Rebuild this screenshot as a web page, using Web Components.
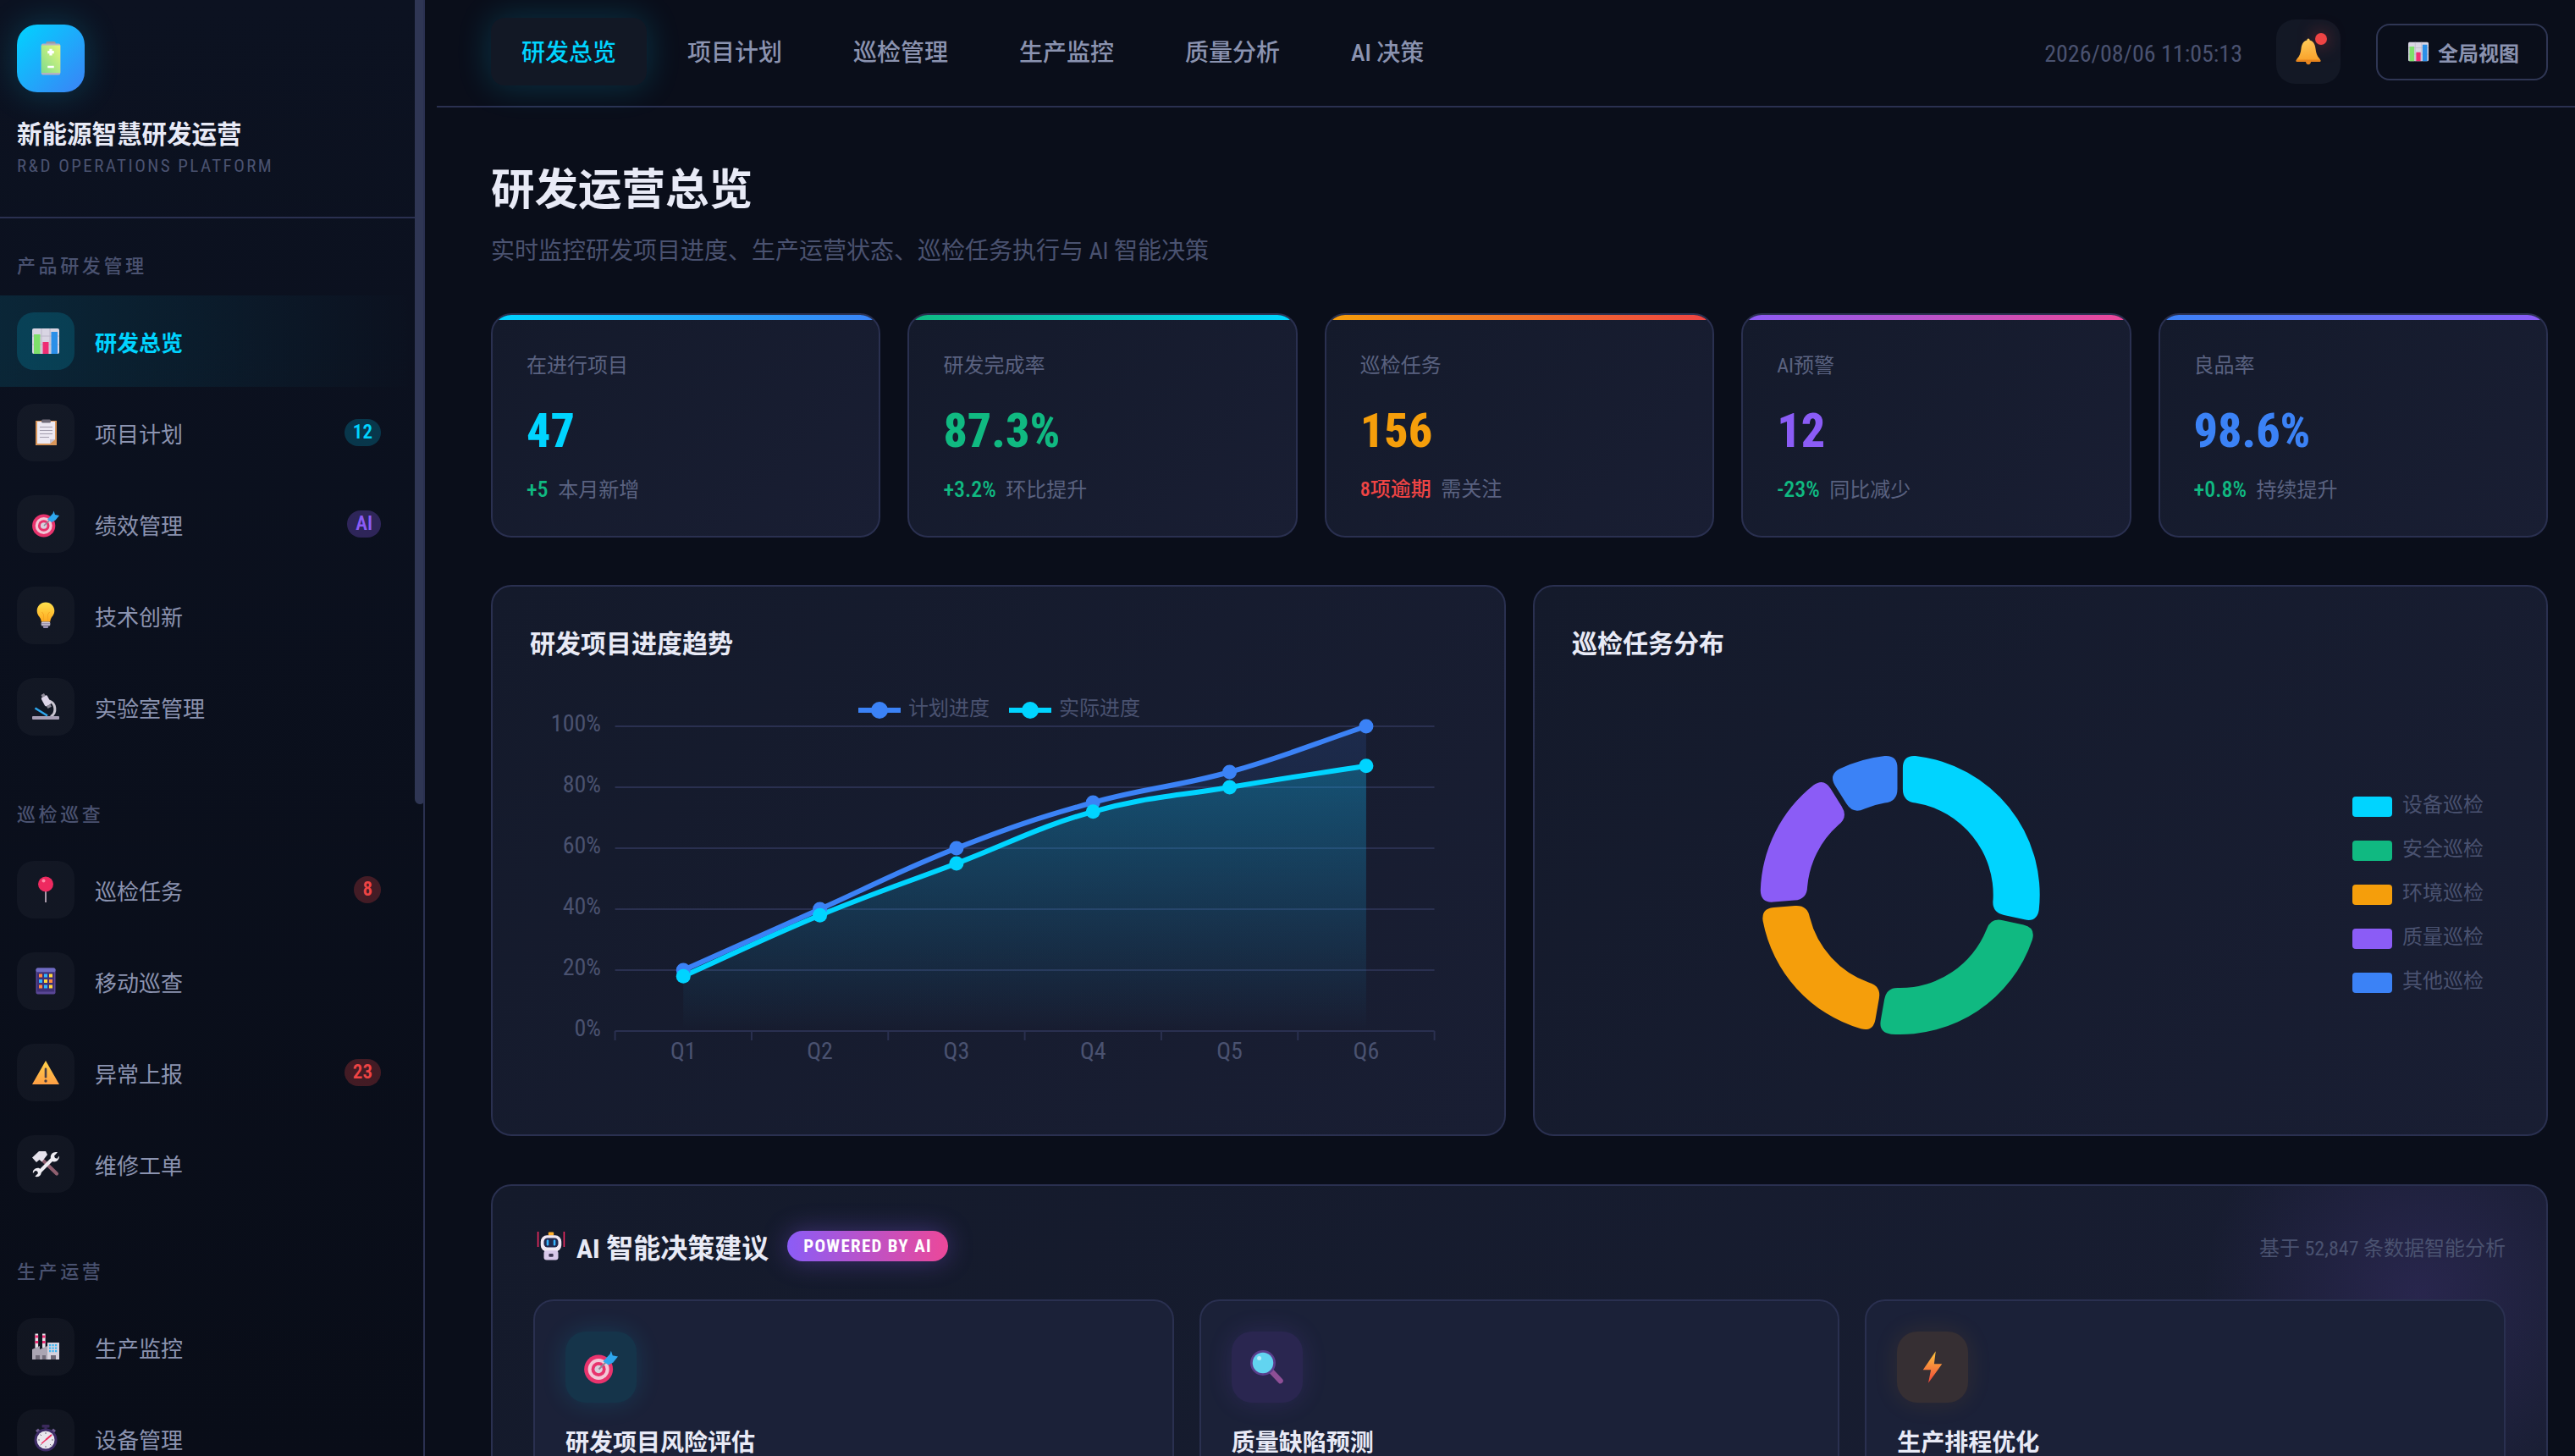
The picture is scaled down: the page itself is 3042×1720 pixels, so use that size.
<!DOCTYPE html>
<html lang="zh-CN">
<head>
<meta charset="utf-8">
<title>新能源智慧研发运营</title>
<style>
  html, body { margin: 0; height: 100%; background: #0a0e1a; overflow: hidden; }
  /* 85% picks the condensed Roboto cut, its latin and digits sit closest to the reference */
  body { font-family: "Roboto", "Noto Sans CJK SC", sans-serif; font-stretch: 85%; color: #8b93b0; }
</style>
</head>
<body>
<ne-app>
  <ne-sidebar slot="sidebar">
    <ne-nav-group label="产品研发管理">
      <ne-nav-item icon="chart" active>研发总览</ne-nav-item>
      <ne-nav-item icon="clipboard" badge="12" tone="cyan">项目计划</ne-nav-item>
      <ne-nav-item icon="target" badge="AI" tone="purple">绩效管理</ne-nav-item>
      <ne-nav-item icon="bulb">技术创新</ne-nav-item>
      <ne-nav-item icon="microscope">实验室管理</ne-nav-item>
    </ne-nav-group>
    <ne-nav-group label="巡检巡查">
      <ne-nav-item icon="pin" badge="8" tone="red">巡检任务</ne-nav-item>
      <ne-nav-item icon="mobile">移动巡查</ne-nav-item>
      <ne-nav-item icon="warning" badge="23" tone="red">异常上报</ne-nav-item>
      <ne-nav-item icon="tools">维修工单</ne-nav-item>
    </ne-nav-group>
    <ne-nav-group label="生产运营">
      <ne-nav-item icon="factory">生产监控</ne-nav-item>
      <ne-nav-item icon="stopwatch">设备管理</ne-nav-item>
    </ne-nav-group>
  </ne-sidebar>

  <ne-topbar>
    <ne-tab active>研发总览</ne-tab>
    <ne-tab>项目计划</ne-tab>
    <ne-tab>巡检管理</ne-tab>
    <ne-tab>生产监控</ne-tab>
    <ne-tab>质量分析</ne-tab>
    <ne-tab>AI 决策</ne-tab>
  </ne-topbar>

  <ne-page-head heading="研发运营总览" sub="实时监控研发项目进度、生产运营状态、巡检任务执行与 AI 智能决策"></ne-page-head>

  <ne-kpi-row>
    <ne-kpi label="在进行项目" value="47" delta="+5" note="本月新增" color="#00d4ff" bar="#00d4ff,#3b82f6"></ne-kpi>
    <ne-kpi label="研发完成率" value="87.3%" delta="+3.2%" note="环比提升" color="#10b981" bar="#10b981,#00d4ff"></ne-kpi>
    <ne-kpi label="巡检任务" value="156" delta="8项逾期" note="需关注" color="#f59e0b" bar="#f59e0b,#ef4444" delta-color="#ef4444" delta-size="24"></ne-kpi>
    <ne-kpi label="AI预警" value="12" delta="-23%" note="同比减少" color="#8b5cf6" bar="#8b5cf6,#ec4899"></ne-kpi>
    <ne-kpi label="良品率" value="98.6%" delta="+0.8%" note="持续提升" color="#3b82f6" bar="#3b82f6,#8b5cf6"></ne-kpi>
  </ne-kpi-row>

  <ne-chart-row>
    <ne-chart-card heading="研发项目进度趋势"><ne-line-chart></ne-line-chart></ne-chart-card>
    <ne-chart-card heading="巡检任务分布"><ne-donut-chart></ne-donut-chart></ne-chart-card>
  </ne-chart-row>

  <ne-ai-panel>
    <ne-ai-card icon="target" tone="cyan">研发项目风险评估</ne-ai-card>
    <ne-ai-card icon="magnifier" tone="purple">质量缺陷预测</ne-ai-card>
    <ne-ai-card icon="bolt" tone="orange">生产排程优化</ne-ai-card>
  </ne-ai-panel>
</ne-app>

<script>
// all icons live on a 32x32 box, ne-icon scales them through its size attribute
const ICONS = {
  battery: `<defs><linearGradient id="g" x1="0" y1="1" x2="1" y2="0"><stop offset="0" stop-color="#7fdc8c"/><stop offset="1" stop-color="#e6f77a"/></linearGradient></defs>
    <rect x="11.5" y="0" width="9" height="4" rx="1.2" fill="#9a98a4"/><rect x="7" y="2" width="18" height="29.5" rx="1.5" fill="#b4b1c2"/>
    <rect x="7" y="3.6" width="18" height="26" fill="url(#g)"/><path d="M14.7 7h2.6v1.8H19v2.6h-1.7v1.8h-2.6v-1.8H13V8.8h1.7z" fill="#fff"/><rect x="13" y="23" width="6" height="2" fill="#fff"/>`,
  chart: `<rect y="1" width="32" height="30" rx="2" fill="#d9d5e3"/><path d="M0 10h32M0 20h32M11 1v30M21 1v30" stroke="#bdb8ca" stroke-width="1"/>
    <rect x="2" y="8" width="7.5" height="23" fill="#7ee06a"/><rect x="12.5" y="17" width="7" height="14" fill="#ee2d73"/><rect x="22.5" y="5" width="7.5" height="26" fill="#2b8fe8"/>`,
  clipboard: `<rect x="4" y="2" width="25" height="29" fill="#d9965a"/><path d="M6 3h21v21l-6 5H6z" fill="#ece8f2"/><path d="M21 29l6-5h-6z" fill="#c6c0d0"/>
    <rect x="11" y="0.5" width="11" height="4" rx="1.5" fill="#6f6a78"/><path d="M9 9.5h15M9 13.5h15M9 17.5h15M9 21.5h11" stroke="#a39eae" stroke-width="1.2"/>`,
  target: `<circle cx="13.7" cy="18" r="13.6" fill="#e8336d"/><circle cx="13.7" cy="18" r="10" fill="#f3c6d6"/><circle cx="13.7" cy="18" r="6.8" fill="#e8336d"/><circle cx="13.7" cy="18" r="3.8" fill="#d8d0dc"/>
    <path d="M14 18L24 8" stroke="#8e8a98" stroke-width="1.6"/><path d="M18 10.5L24.5 3.5 25.5 0.5 27 5 32 6 27.5 11.5 23 14z" fill="#2ea7ee"/>`,
  bulb: `<defs><linearGradient id="g" x1="0" y1="0" x2="0" y2="1"><stop offset="0" stop-color="#ffe14d"/><stop offset="1" stop-color="#ffa91f"/></linearGradient></defs>
    <path d="M16 .5C10 .5 5.700 5 5.700 10.600c0 4.400 2.500 6.400 4 9 .7 1.200 1 2.500 1 4h10.600c0-1.500.3-2.800 1-4 1.500-2.600 4-4.600 4-9C26.300 5 22 .5 16 .5z" fill="url(#g)"/>
    <path d="M13.500 23V15l-2-3M18.500 23V15l2-3" stroke="#f5a623" stroke-width="1" fill="none"/><rect x="10.700" y="23.500" width="10.600" height="5" rx="1.500" fill="#cdc6d6"/><path d="M11 25.500h10M11 27.300h10" stroke="#8f86a0" stroke-width=".8"/><rect x="13" y="28.500" width="6" height="2.500" rx="1" fill="#9a8fb0"/>`,
  microscope: `<path d="M20 9c8 2.500 9.500 14 2 18.500" stroke="#c9c5d0" stroke-width="3" fill="none"/><rect y="27" width="32" height="4" rx="1" fill="#a79fb5"/>
    <g transform="rotate(-28 16 8)"><rect x="12" y="3" width="8" height="12" rx="2" fill="#ddd5e8"/><rect x="14" y="0" width="4" height="3.500" fill="#8e8a98"/><rect x="13.500" y="15" width="5" height="3" fill="#8e8a98"/></g>
    <path d="M3.500 17.500L18 26.500" stroke="#2ea7ee" stroke-width="2.600"/>`,
  pin: `<rect x="15.100" y="15" width="1.800" height="16" fill="#b9a8b8"/><circle cx="16" cy="9.500" r="9" fill="#ee2a60"/><circle cx="13.500" cy="5.500" r="2" fill="#ff8aa8"/>`,
  mobile: `<rect x="4.500" y=".5" width="23" height="31" rx="2" fill="#5a4696"/><rect x="4.500" y=".5" width="23" height="5" rx="2" fill="#6f6cc4"/><rect x="6" y="5.500" width="20" height="23" fill="#3f3076"/>
    <g><rect x="8" y="7.500" width="4" height="4" fill="#ff8a3d"/><rect x="14" y="7.500" width="4" height="4" fill="#2fb5ff"/><rect x="20" y="7.500" width="4" height="4" fill="#ffd83d"/>
    <rect x="8" y="14" width="4" height="4" fill="#2fb5ff"/><rect x="14" y="14" width="4" height="4" fill="#ffd83d"/><rect x="20" y="14" width="4" height="4" fill="#ff8a3d"/>
    <rect x="8" y="20.500" width="4" height="4" fill="#ff8a3d"/><rect x="14" y="20.500" width="4" height="4" fill="#2fb5ff"/><rect x="20" y="20.500" width="4" height="4" fill="#ffd83d"/></g>`,
  warning: `<defs><linearGradient id="g" x1="0" y1="0" x2="0" y2="1"><stop offset="0" stop-color="#ffd24a"/><stop offset="1" stop-color="#ff9f45"/></linearGradient></defs>
    <path d="M16 2L32 30H0z" fill="url(#g)"/><rect x="14.700" y="10.500" width="2.600" height="12" rx="1.300" fill="#4a3f45"/><circle cx="16" cy="26" r="1.700" fill="#4a3f45"/>`,
  tools: `<path d="M13 12L29 27.500" stroke="#8f5f6f" stroke-width="4.200" stroke-linecap="round"/><path d="M0 8.500L8 1h8l2 4-6.500 8.500-3-2.500-3.500 3z" fill="#e6e2ec"/>
    <path d="M8 26L25 9" stroke="#efedf3" stroke-width="4"/><path d="M22 9.500c-1-3.500 1.500-7.500 6-7.500.7 0 1.300.1 2 .3L26 6.500l1 2.500 2.500.8 2.300-3.300c.8 4.600-3.800 8.200-8 6.500z" fill="#efedf3"/><path d="M10.500 24.500c1 3.500-1.500 6.700-5 6.700-.8 0-1.600-.2-2.200-.5L7 27l-1-2.500-2.500-.5-2.500 3c-1-4 3.500-7.500 7.500-6z" fill="#efedf3"/>`,
  factory: `<rect x="3.500" y=".5" width="3.600" height="17" fill="#e6e2ea"/><path d="M3.500 2.500h3.600v3H3.500zM3.500 9h3.600v3H3.500z" fill="#ee2d73"/><rect x="12" y=".5" width="3.600" height="17" fill="#e6e2ea"/><path d="M12 2.500h3.600v3H12zM12 9h3.600v3H12z" fill="#ee2d73"/>
    <path d="M0 31V19l9-4v4l9-4v16z" fill="#aaa5b3"/><rect x="4" y="26" width="5" height="5" fill="#6f6a78"/><rect x="12" y="26" width="4" height="5" fill="#6f6a78"/><rect x="18" y="11" width="14" height="20" fill="#d6d2dd"/>
    <g fill="#3cb8f5"><rect x="20" y="13" width="2.200" height="2.200"/><rect x="23.500" y="13" width="2.200" height="2.200"/><rect x="27" y="13" width="2.200" height="2.200"/><rect x="20" y="16.500" width="2.200" height="2.200"/><rect x="23.500" y="16.500" width="2.200" height="2.200"/><rect x="27" y="16.500" width="2.200" height="2.200"/><rect x="20" y="20" width="2.200" height="2.200"/><rect x="23.500" y="20" width="2.200" height="2.200"/><rect x="27" y="20" width="2.200" height="2.200"/></g><rect x="22" y="26" width="6" height="5" fill="#6f6a78"/>`,
  stopwatch: `<rect x="11.500" y="0" width="9" height="3.500" rx="1" fill="#3b2a5c"/><rect x="14.500" y="3" width="3" height="3" fill="#3b2a5c"/><path d="M4 7l3-2.500 2.500 2.500-3 3zM28 7l-3-2.500-2.500 2.500 3 3z" fill="#6b5a8c"/>
    <circle cx="16" cy="18" r="13.500" fill="#3e2c66"/><circle cx="16" cy="18" r="10.500" fill="#e9e6ee"/><path d="M16 9v2M16 25v2M7 18h2M23 18h2M9.600 11.600l1.400 1.400M21 23l1.400 1.400M9.600 24.400l1.400-1.400M21 13l1.400-1.400" stroke="#6f6a78" stroke-width="1"/><path d="M16 18L23 12" stroke="#ee2d5f" stroke-width="2"/><path d="M16 18l-5 4.500" stroke="#ee2d5f" stroke-width="1.400"/>`,
  bell: `<defs><linearGradient id="g" x1="0" y1="0" x2="0" y2="1"><stop offset="0" stop-color="#ffd35c"/><stop offset="1" stop-color="#f9a029"/></linearGradient></defs>
    <path d="M16 .5c-1 0-1.600.8-1.600 1.900C10 3.500 8 7.500 7.500 12.500c-.5 5-1.800 8.500-4.500 11.500-.8.900-1.400 2-1.400 3.500h28.800c0-1.500-.6-2.600-1.400-3.500-2.700-3-4-6.500-4.500-11.500C24 7.500 22 3.500 17.600 2.400 17.600 1.300 17 .5 16 .5z" fill="url(#g)"/>
    <rect x="1.600" y="25.500" width="28.800" height="2.500" rx="1" fill="#e8861e"/><path d="M13 28h6c0 1.800-1.300 3.200-3 3.200S13 29.800 13 28z" fill="#e8861e"/>`,
  magnifier: `<path d="M20 20L28.500 29" stroke="#8e4f96" stroke-width="5" stroke-linecap="round"/><circle cx="12" cy="12" r="12" fill="#5a3f8c"/><circle cx="12" cy="12" r="9.800" fill="#62d4f0"/><circle cx="8.500" cy="7.500" r="2" fill="#b5f0fb"/>`,
  bolt: `<defs><linearGradient id="g" x1="0" y1="0" x2="0" y2="1"><stop offset="0" stop-color="#ffc83d"/><stop offset="1" stop-color="#f0443a"/></linearGradient></defs><path d="M19 1L7 18.500h7.500L12 31 25 13h-7.500z" fill="url(#g)"/>`,
  robot: `<path d="M1.500 0v17M30.500 0v17" stroke="#ee2a60" stroke-width="1.500"/><rect x="13" y=".5" width="6" height="4" rx="1" fill="#ffb02e"/><rect x="4.500" y="4" width="23" height="18" rx="7" fill="#f0e8f4"/>
    <rect x="8" y="7" width="16" height="10.500" rx="4" fill="#20284f"/><rect x="11" y="9" width="2.400" height="6.500" rx="1" fill="#36b5ff"/><rect x="18.600" y="9" width="2.400" height="6.500" rx="1" fill="#36b5ff"/>
    <rect x="8" y="21" width="16" height="10.500" rx="3" fill="#d8c8ea"/><rect x="13.500" y="24.500" width="5" height="3.500" rx="1" fill="#3a3350"/>`,
};

class NeIcon extends HTMLElement {
  constructor() {
    super();
    const size = this.getAttribute('size') || 32;
    const root = this.attachShadow({ mode: 'open' });
    root.innerHTML = `
      <style>:host { display: block; width: ${size}px; height: ${size}px; } svg { display: block; }</style>
      <svg width="${size}" height="${size}" viewBox="0 0 32 32">${ICONS[this.getAttribute('name')] || ''}</svg>`;
  }
}
customElements.define('ne-icon', NeIcon);

class NeApp extends HTMLElement {
  constructor() {
    super();
    this.attachShadow({ mode: 'open' }).innerHTML = `
      <style>
        :host { display: flex; height: 1720px; overflow: hidden; }
        main { flex: 1; min-width: 0; margin-left: 14px; display: flex; flex-direction: column; }
        .content { display: flex; flex-direction: column; padding: 67px 32px 0 64px; }
      </style>
      <slot name="sidebar"></slot>
      <main>
        <slot name="top"></slot>
        <div class="content"><slot></slot></div>
      </main>`;
  }
  connectedCallback() {
    const top = this.querySelector('ne-topbar');
    if (top) top.slot = 'top';
  }
}
customElements.define('ne-app', NeApp);

class NeSidebar extends HTMLElement {
  constructor() {
    super();
    this.attachShadow({ mode: 'open' }).innerHTML = `
      <style>
        :host { display: block; position: relative; flex: 0 0 502px; box-sizing: border-box; height: 100%; overflow: hidden;
                border-right: 2px solid #2a3050; background: linear-gradient(180deg, #0c1221, #090d18); }
        header { height: 258px; box-sizing: border-box; padding: 29px 20px 0; border-bottom: 2px solid #2a3050; }
        .logo { width: 80px; height: 80px; border-radius: 24px; display: flex; align-items: center; justify-content: center;
                background: linear-gradient(135deg, #00d4ff, #3b82f6); box-shadow: 0 0 40px rgba(0,212,255,.22); }
        h1 { margin: 30px 0 0; font-size: 29.500px; line-height: 40px; font-weight: 700; color: #e8eaf6; white-space: nowrap; }
        .sub { margin-top: 5px; font-size: 21px; line-height: 24px; letter-spacing: 2.450px; color: #4a5270; white-space: nowrap; }
        nav { padding: 42px 10px 0 0; display: flex; flex-direction: column; gap: 59px; }
        .thumb { position: absolute; top: 0; right: -2px; width: 12px; height: 950px; background: #2f3654; border-radius: 0 0 6px 6px; }
      </style>
      <header>
        <div class="logo"><ne-icon name="battery" size="40"></ne-icon></div>
        <h1>新能源智慧研发运营</h1>
        <div class="sub">R&amp;D OPERATIONS PLATFORM</div>
      </header>
      <nav><slot></slot></nav>
      <div class="thumb"></div>`;
  }
}
customElements.define('ne-sidebar', NeSidebar);

class NeNavGroup extends HTMLElement {
  constructor() {
    super();
    this.attachShadow({ mode: 'open' }).innerHTML = `
      <style>
        :host { display: block; }
        .label { padding-left: 20px; height: 30px; line-height: 30px; margin-bottom: 19px; font-size: 22px; letter-spacing: 3.600px; color: #4a5270; font-weight: 500; }
      </style>
      <div class="label">${this.getAttribute('label')}</div>
      <slot></slot>`;
  }
}
customElements.define('ne-nav-group', NeNavGroup);

const BADGE_TONES = {
  cyan: ['rgba(0,212,255,.2)', '#00d4ff'],
  purple: ['rgba(139,92,246,.28)', '#8b5cf6'],
  red: ['rgba(239,68,68,.25)', '#ef4444'],
};

class NeNavItem extends HTMLElement {
  constructor() {
    super();
    const active = this.hasAttribute('active');
    const badge = this.getAttribute('badge');
    const tone = BADGE_TONES[this.getAttribute('tone')] || BADGE_TONES.cyan;
    this.attachShadow({ mode: 'open' }).innerHTML = `
      <style>
        :host { display: flex; align-items: center; height: 108px; box-sizing: border-box; padding: 0 40px 0 20px; gap: 24px;
                font-size: 26px; font-weight: ${active ? 600 : 400}; color: ${active ? '#00d4ff' : '#8b93b0'};
                background: ${active ? 'linear-gradient(90deg, rgba(0,212,255,.11), rgba(0,212,255,0))' : 'none'}; }
        .box { width: 68px; height: 68px; border-radius: 20px; display: flex; align-items: center; justify-content: center; flex: none;
               background: ${active ? 'rgba(0,212,255,.16)' : 'rgba(255,255,255,.035)'}; }
        .text { flex: 1; }
        .badge { height: 32px; line-height: 32px; padding: 0 10px; border-radius: 16px; font-size: 23px; font-weight: 600;
                 background: ${tone[0]}; color: ${tone[1]}; }
      </style>
      <div class="box"><ne-icon name="${this.getAttribute('icon')}"></ne-icon></div>
      <div class="text"><slot></slot></div>
      ${badge ? `<div class="badge">${badge}</div>` : ''}`;
  }
}
customElements.define('ne-nav-item', NeNavItem);

class NeTopbar extends HTMLElement {
  constructor() {
    super();
    this.attachShadow({ mode: 'open' }).innerHTML = `
      <style>
        :host { display: flex; align-items: center; box-sizing: border-box; height: 127px; padding: 0 32px 3px 64px; flex: none;
                border-bottom: 2px solid #2a3050; }
        .tabs { display: flex; gap: 12px; flex: 1; }
        .time { font-size: 28px; color: #4a5270; margin-right: 40px; white-space: nowrap; padding-top: 4px; }
        .bell { position: relative; width: 76px; height: 76px; border-radius: 22px; background: #131825; margin-right: 42px;
                display: flex; align-items: center; justify-content: center; }
        .dot { position: absolute; top: 16px; left: 46px; width: 14px; height: 14px; border-radius: 50%; background: #ef4444;
               box-shadow: 0 0 20px rgba(239,68,68,.6); }
        .btn { display: flex; align-items: center; gap: 11px; box-sizing: border-box; width: 203px; height: 67px; padding-left: 36px;
               border: 2px solid #2f3654; border-radius: 16px; font-size: 24px; font-weight: 600; color: #8b93b0; }
      </style>
      <div class="tabs"><slot></slot></div>
      <div class="time">2026/08/06 11:05:13</div>
      <div class="bell"><ne-icon name="bell"></ne-icon><span class="dot"></span></div>
      <div class="btn"><ne-icon name="chart" size="24"></ne-icon>全局视图</div>`;
  }
}
customElements.define('ne-topbar', NeTopbar);

class NeTab extends HTMLElement {
  constructor() {
    super();
    const active = this.hasAttribute('active');
    this.attachShadow({ mode: 'open' }).innerHTML = `
      <style>
        :host { display: block; height: 80px; line-height: 84px; padding: 0 36px; border-radius: 16px; font-size: 28px; font-weight: 500;
                white-space: nowrap; color: ${active ? '#00d4ff' : '#8b93b0'};
                ${active ? 'background: #121825; box-shadow: 0 0 40px rgba(0,212,255,.2);' : ''} }
      </style>
      <slot></slot>`;
  }
}
customElements.define('ne-tab', NeTab);

class NePageHead extends HTMLElement {
  constructor() {
    super();
    this.attachShadow({ mode: 'open' }).innerHTML = `
      <style>
        :host { display: block; margin-bottom: 53px; }
        h2 { margin: 0; font-size: 51.500px; line-height: 62px; font-weight: 700; color: #e8eaf6; }
        p { margin: 21px 0 0; font-size: 28px; line-height: 40px; color: #4a5270; }
      </style>
      <h2>${this.getAttribute('heading')}</h2>
      <p>${this.getAttribute('sub')}</p>`;
  }
}
customElements.define('ne-page-head', NePageHead);

class NeKpiRow extends HTMLElement {
  constructor() {
    super();
    this.attachShadow({ mode: 'open' }).innerHTML = `
      <style>:host { display: grid; grid-template-columns: repeat(5, 1fr); gap: 32px; margin-bottom: 56px; }</style><slot></slot>`;
  }
}
customElements.define('ne-kpi-row', NeKpiRow);

class NeKpi extends HTMLElement {
  constructor() {
    super();
    const [a, b] = this.getAttribute('bar').split(',');
    this.attachShadow({ mode: 'open' }).innerHTML = `
      <style>
        :host { display: block; position: relative; box-sizing: border-box; height: 265px; padding: 43px 40px 0; overflow: hidden;
                border: 2px solid #2a3050; border-radius: 24px; background: linear-gradient(135deg, #141a2b, #191e33); }
        .bar { position: absolute; top: 0; left: 0; right: 0; height: 6px; background: linear-gradient(90deg, ${a}, ${b}); }
        .label { font-size: 24px; line-height: 34px; color: #5a6280; }
        .value { margin-top: 28px; font-size: 56px; line-height: 64px; font-weight: 800; color: ${this.getAttribute('color')}; }
        .note { margin-top: 20px; font-size: 24px; line-height: 34px; color: #5a6280; white-space: nowrap; }
        .delta { color: ${this.getAttribute('delta-color') || '#10b981'}; font-size: ${this.getAttribute('delta-size') || 26}px; font-weight: 500; margin-right: 6px; }
      </style>
      <div class="bar"></div>
      <div class="label">${this.getAttribute('label')}</div>
      <div class="value">${this.getAttribute('value')}</div>
      <div class="note"><span class="delta">${this.getAttribute('delta')}</span> ${this.getAttribute('note')}</div>`;
  }
}
customElements.define('ne-kpi', NeKpi);

class NeChartRow extends HTMLElement {
  constructor() {
    super();
    this.attachShadow({ mode: 'open' }).innerHTML = `
      <style>:host { display: grid; grid-template-columns: repeat(2, 1fr); gap: 32px; margin-bottom: 57px; }</style><slot></slot>`;
  }
}
customElements.define('ne-chart-row', NeChartRow);

class NeChartCard extends HTMLElement {
  constructor() {
    super();
    this.attachShadow({ mode: 'open' }).innerHTML = `
      <style>
        :host { display: block; box-sizing: border-box; height: 651px; padding-top: 48px; overflow: hidden;
                border: 2px solid #2a3050; border-radius: 24px; background: linear-gradient(135deg, #141a2b, #191e33); }
        h3 { margin: 0; padding-left: 44px; font-size: 30px; line-height: 40px; font-weight: 700; color: #e8eaf6; }
      </style>
      <h3>${this.getAttribute('heading')}</h3>
      <slot></slot>`;
  }
}
customElements.define('ne-chart-card', NeChartCard);

// same bezier handles as a tension 0.4 chart line
function smoothPath(points) {
  let d = `M${points[0][0]} ${points[0][1]}`;
  const handle = (i) => {
    const p0 = points[Math.max(i - 1, 0)], p1 = points[i], p2 = points[Math.min(i + 1, points.length - 1)];
    const d01 = Math.hypot(p1[0] - p0[0], p1[1] - p0[1]), d12 = Math.hypot(p2[0] - p1[0], p2[1] - p1[1]);
    const fa = 0.4 * d01 / (d01 + d12), fb = 0.4 * d12 / (d01 + d12);
    return {
      prev: [p1[0] - fa * (p2[0] - p0[0]), p1[1] - fa * (p2[1] - p0[1])],
      next: [p1[0] + fb * (p2[0] - p0[0]), p1[1] + fb * (p2[1] - p0[1])],
    };
  };
  for (let i = 1; i < points.length; i++) {
    const a = handle(i - 1).next, b = handle(i).prev;
    d += ` C${a[0]} ${a[1]} ${b[0]} ${b[1]} ${points[i][0]} ${points[i][1]}`;
  }
  return d;
}

class NeLineChart extends HTMLElement {
  constructor() {
    super();
    const left = 726.6, right = 1694.6, bottom = 1218, step = 72, band = (right - left) / 6;
    const px = (i) => left + band * (i + 0.5);
    const py = (v) => bottom - v / 20 * step;
    const plan = [20, 40, 60, 75, 85, 100].map((v, i) => [px(i), py(v)]);
    const real = [18, 38, 55, 72, 80, 87].map((v, i) => [px(i), py(v)]);
    const area = (pts) => `${smoothPath(pts)} L${pts[5][0]} ${bottom} L${pts[0][0]} ${bottom}Z`;

    let grid = '';
    for (let v = 0; v <= 100; v += 20) {
      grid += `<path d="M${left} ${py(v)}H${right}" stroke="#2a3050" stroke-width="2"/>`;
      grid += `<text x="710" y="${py(v) + 6}" text-anchor="end">${v}%</text>`;
    }
    for (let i = 0; i <= 6; i++) {
      grid += `<path d="M${left + band * i} ${bottom}v11" stroke="#2a3050" stroke-width="2"/>`;
    }
    const labels = ['Q1', 'Q2', 'Q3', 'Q4', 'Q5', 'Q6'].map((q, i) => `<text x="${px(i)}" y="1251" text-anchor="middle">${q}</text>`).join('');
    const dots = (pts, c) => pts.map((p) => `<circle cx="${p[0]}" cy="${p[1]}" r="8.500" fill="${c}"/>`).join('');
    const legend = (x, c, t) => `<path d="M${x} 839h50" stroke="${c}" stroke-width="6"/><circle cx="${x + 25}" cy="839" r="10" fill="${c}"/><text class="cjk" x="${x + 59}" y="845">${t}</text>`;

    this.attachShadow({ mode: 'open' }).innerHTML = `
      <style>
        :host { display: block; }
        svg { display: block; }
        text { font-size: 28px; fill: #4a5270; }
        text.cjk { font-size: 24px; }
      </style>
      <svg width="1195" height="559" viewBox="582 781 1195 559">
        <defs>
          <linearGradient id="fillPlan" gradientUnits="userSpaceOnUse" x1="0" y1="858" x2="0" y2="1218"><stop offset="0" stop-color="#3b82f6" stop-opacity=".14"/><stop offset="1" stop-color="#3b82f6" stop-opacity="0"/></linearGradient>
          <linearGradient id="fillReal" gradientUnits="userSpaceOnUse" x1="0" y1="858" x2="0" y2="1218"><stop offset="0" stop-color="#00d4ff" stop-opacity=".27"/><stop offset="1" stop-color="#00d4ff" stop-opacity="0"/></linearGradient>
        </defs>
        ${grid}${labels}
        <path d="${area(plan)}" fill="url(#fillPlan)"/>
        <path d="${area(real)}" fill="url(#fillReal)"/>
        <path d="${smoothPath(plan)}" fill="none" stroke="#3b82f6" stroke-width="6"/>
        <path d="${smoothPath(real)}" fill="none" stroke="#00d4ff" stroke-width="6"/>
        ${dots(plan, '#3b82f6')}${dots(real, '#00d4ff')}
        ${legend(1014, '#3b82f6', '计划进度')}${legend(1192, '#00d4ff', '实际进度')}
      </svg>`;
  }
}
customElements.define('ne-line-chart', NeLineChart);

// one ring segment with rounded corners, angles in degrees clockwise from the top
function ringSegment(cx, cy, r0, r1, from, to, gap, c) {
  const pt = (r, deg) => {
    const a = (deg - 90) * Math.PI / 180;
    return [cx + r * Math.cos(a), cy + r * Math.sin(a)];
  };
  const deg = (len, r) => len / r * 180 / Math.PI;
  const s = (p) => `${p[0].toFixed(2)} ${p[1].toFixed(2)}`;
  const oa = from + deg(gap, r1), ob = to - deg(gap, r1), ia = from + deg(gap, r0), ib = to - deg(gap, r0);
  const radial = (r, base, sign) => pt(r, base + sign * deg(gap, r));
  return [
    `M${s(pt(r1, oa + deg(c, r1)))}`,
    `A${r1} ${r1} 0 ${ob - oa > 180 ? 1 : 0} 1 ${s(pt(r1, ob - deg(c, r1)))}`,
    `Q${s(pt(r1, ob))} ${s(radial(r1 - c, to, -1))}`,
    `L${s(radial(r0 + c, to, -1))}`,
    `Q${s(pt(r0, ib))} ${s(pt(r0, ib - deg(c, r0)))}`,
    `A${r0} ${r0} 0 0 0 ${s(pt(r0, ia + deg(c, r0)))}`,
    `Q${s(pt(r0, ia))} ${s(radial(r0 + c, from, 1))}`,
    `L${s(radial(r1 - c, from, 1))}`,
    `Q${s(pt(r1, oa))} ${s(pt(r1, oa + deg(c, r1)))}Z`,
  ].join(' ');
}

const DONUT = [
  { name: '设备巡检', color: '#00d4ff', to: 102.5 },
  { name: '安全巡检', color: '#10b981', to: 190 },
  { name: '环境巡检', color: '#f59e0b', to: 265.5 },
  { name: '质量巡检', color: '#8b5cf6', to: 328 },
  { name: '其他巡检', color: '#3b82f6', to: 360 },
];

class NeDonutChart extends HTMLElement {
  constructor() {
    super();
    let from = 0, parts = '', legend = '';
    DONUT.forEach((d, i) => {
      parts += `<path d="${ringSegment(2245.7, 1057, 110, 165, from, d.to, 3.2, 15)}" fill="${d.color}"/>`;
      from = d.to;
      const y = 941 + i * 52;
      legend += `<rect x="2780" y="${y}" width="47" height="24" rx="4" fill="${d.color}"/><text x="2839" y="${y + 18}">${d.name}</text>`;
    });
    this.attachShadow({ mode: 'open' }).innerHTML = `
      <style>
        :host { display: block; }
        svg { display: block; }
        text { font-size: 24px; fill: #4a5270; }
      </style>
      <svg width="1195" height="559" viewBox="1814 781 1195 559">${parts}${legend}</svg>`;
  }
}
customElements.define('ne-donut-chart', NeDonutChart);

class NeAiPanel extends HTMLElement {
  constructor() {
    super();
    this.attachShadow({ mode: 'open' }).innerHTML = `
      <style>
        :host { display: block; position: relative; box-sizing: border-box; height: 600px; padding: 48px 48px 0; overflow: hidden;
                border: 2px solid #2a3050; border-radius: 24px; background: linear-gradient(135deg, #141a2b, #191e33); }
        .glow { position: absolute; top: -130px; right: -110px; width: 520px; height: 520px; border-radius: 50%;
                background: radial-gradient(circle, rgba(139,92,246,.14), rgba(139,92,246,0) 70%); }
        .head { position: relative; display: flex; align-items: center; height: 46px; margin-bottom: 40px; }
        .title { display: flex; align-items: center; gap: 13px; margin-left: 4px; font-size: 32px; font-weight: 700; color: #e8eaf6; }
        .pill { margin-left: 22px; height: 36px; line-height: 36px; padding: 0 19px; border-radius: 18px; font-size: 21px; font-weight: 700; letter-spacing: 1.300px; color: #fff;
                background: linear-gradient(90deg, #8b5cf6, #ec4899); box-shadow: 0 0 30px rgba(139,92,246,.35); white-space: nowrap; }
        .basis { margin-left: auto; font-size: 24px; color: #4a5270; }
        .cards { position: relative; display: grid; grid-template-columns: repeat(3, 1fr); gap: 30px; }
      </style>
      <div class="glow"></div>
      <div class="head">
        <div class="title"><ne-icon name="robot" size="34"></ne-icon>AI 智能决策建议</div>
        <div class="pill">POWERED BY AI</div>
        <div class="basis">基于 52,847 条数据智能分析</div>
      </div>
      <div class="cards"><slot></slot></div>`;
  }
}
customElements.define('ne-ai-panel', NeAiPanel);

const AI_TONES = {
  cyan: ['#15344a', 'rgba(0,212,255,.14)'],
  purple: ['#2a2650', 'rgba(139,92,246,.14)'],
  orange: ['#362f33', 'rgba(245,158,11,.1)'],
};

class NeAiCard extends HTMLElement {
  constructor() {
    super();
    const tone = AI_TONES[this.getAttribute('tone')];
    this.attachShadow({ mode: 'open' }).innerHTML = `
      <style>
        :host { display: block; box-sizing: border-box; height: 320px; padding: 36px; border: 2px solid #2a3050; border-radius: 24px; background: #1b2138; }
        .box { width: 84px; height: 84px; border-radius: 24px; display: flex; align-items: center; justify-content: center;
               background: ${tone[0]}; box-shadow: 0 0 30px ${tone[1]}; }
        h4 { margin: 28px 0 0; font-size: 28px; line-height: 40px; font-weight: 700; color: #e8eaf6; }
      </style>
      <div class="box"><ne-icon name="${this.getAttribute('icon')}" size="40"></ne-icon></div>
      <h4><slot></slot></h4>`;
  }
}
customElements.define('ne-ai-card', NeAiCard);
</script>
</body>
</html>
